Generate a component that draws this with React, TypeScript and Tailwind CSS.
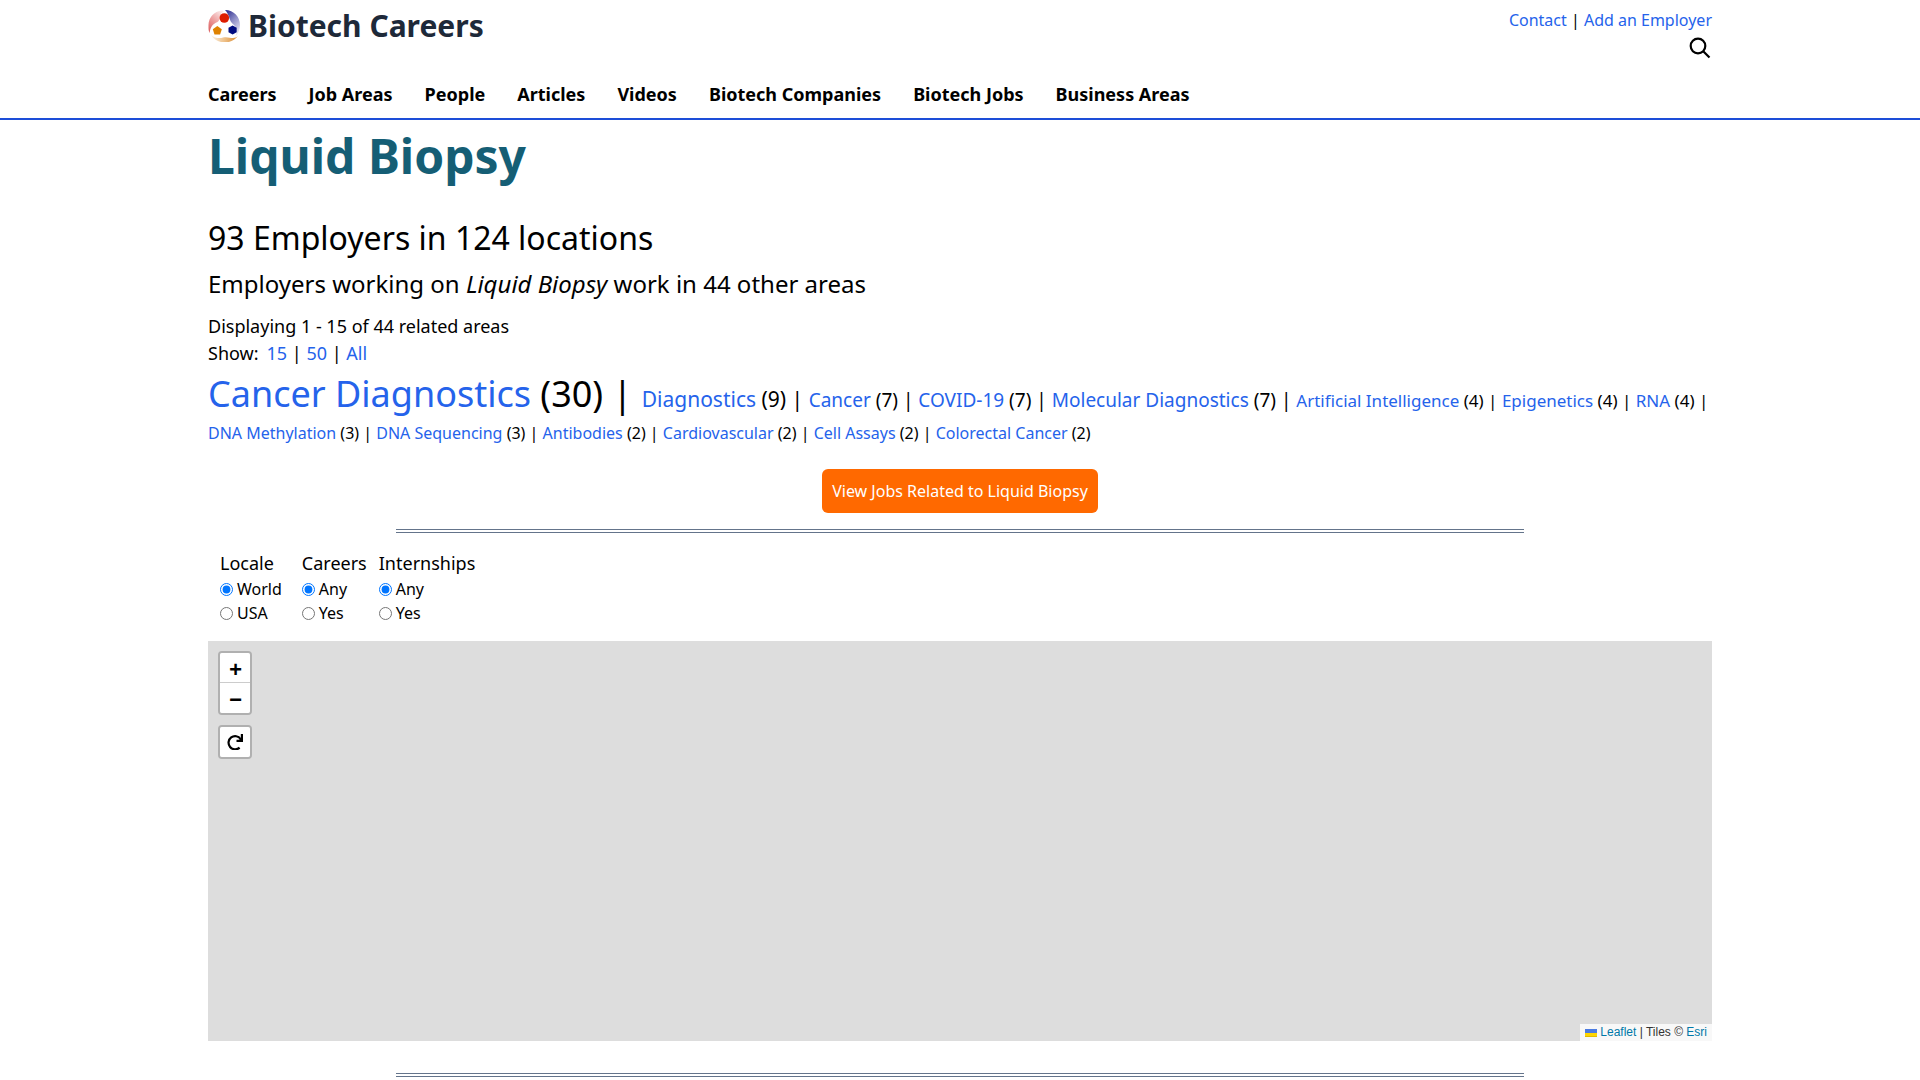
import React from "react";

const navItems = [
  "Careers",
  "Job Areas",
  "People",
  "Articles",
  "Videos",
  "Biotech Companies",
  "Biotech Jobs",
  "Business Areas",
];

const areas = [
  { name: "Cancer Diagnostics", count: 30, size: "text-[36px]" },
  { name: "Diagnostics", count: 9, size: "text-[21px]" },
  { name: "Cancer", count: 7, size: "text-[19px]" },
  { name: "COVID-19", count: 7, size: "text-[19px]" },
  { name: "Molecular Diagnostics", count: 7, size: "text-[19px]" },
  { name: "Artificial Intelligence", count: 4, size: "text-[17px]" },
  { name: "Epigenetics", count: 4, size: "text-[17px]" },
  { name: "RNA", count: 4, size: "text-[17px]" },
  { name: "DNA Methylation", count: 3, size: "text-[16px]" },
  { name: "DNA Sequencing", count: 3, size: "text-[16px]" },
  { name: "Antibodies", count: 2, size: "text-[16px]" },
  { name: "Cardiovascular", count: 2, size: "text-[16px]" },
  { name: "Cell Assays", count: 2, size: "text-[16px]" },
  { name: "Colorectal Cancer", count: 2, size: "text-[16px]" },
];

const filters = [
  { title: "Locale", name: "locale", options: ["World", "USA"], gap: "mr-5" },
  { title: "Careers", name: "careers", options: ["Any", "Yes"], gap: "mr-3" },
  { title: "Internships", name: "internships", options: ["Any", "Yes"], gap: "mr-3" },
];

function A({ children }: { children: React.ReactNode }) {
  return (
    <a href="#" className="text-[#2563eb]">
      {children}
    </a>
  );
}

function Logo() {
  return (
    <svg viewBox="0 0 32 32" className="size-8" aria-hidden="true">
      <defs>
        <linearGradient id="lr" x1="0.8" y1="0" x2="0.2" y2="1">
          <stop offset="0" stopColor="#fbeaea" />
          <stop offset="0.5" stopColor="#eda0a0" />
          <stop offset="1" stopColor="#dc6060" />
        </linearGradient>
        <linearGradient id="lb" x1="0" y1="0" x2="0.6" y2="1">
          <stop offset="0" stopColor="#20208a" />
          <stop offset="0.5" stopColor="#8a8ac4" />
          <stop offset="1" stopColor="#e4e4f2" />
        </linearGradient>
        <linearGradient id="lo" x1="0" y1="0" x2="1" y2="0">
          <stop offset="0" stopColor="#fbf2e6" />
          <stop offset="0.5" stopColor="#eec088" />
          <stop offset="1" stopColor="#d98a30" />
        </linearGradient>
      </defs>
      <path d="M14 .5C6 1 .5 8 .5 15c0 4 0 5 1 8 1-6 3-9 8-11 2-1 2-4 3-7 1-2 2-3 3-3 0-1-1-1.500-1.500-1.500Z" fill="url(#lr)" />
      <path d="M17 0c9 0 15 7 15 15 0 5-2 9-5 12 3-5 2-9-1-12-3-2-4-5-5-8-1-3-2-5-4-7Z" fill="url(#lb)" />
      <path d="M3 25c4 3.500 9 3.500 12 2.500 4-1 7 .5 10 .5 2 0 4-1 5-2-3 4-8 6.500-13 6.500-6 0-11-3-14-7.500Z" fill="url(#lo)" />
      <circle cx="16.300" cy="8" r="4.800" fill="#dd1c00" />
      <path d="m9.300 16 4.500 3.300-1.700 5.200H6.500l-1.700-5.200Z" fill="#df8200" />
      <path d="m24.600 15.400 4.100 2.300v4.600l-4.100 2.300-4.100-2.300v-4.600Z" fill="#000c80" />
    </svg>
  );
}

function Rule() {
  return <hr className="mx-auto h-0 w-3/4 border-0 border-t-4 border-double border-[#64748b]" />;
}

const mapButton = "flex h-[30px] w-[30px] items-center justify-center bg-white text-black";

export default function App() {
  return (
    <div className="font-['Noto_Sans',sans-serif] text-base text-black">
      <header className="border-b-2 border-[#1d4ed8]">
        <div className="mx-auto max-w-[1536px] px-4">
          <div className="flex justify-between pt-2">
            <a href="#" className="flex items-center gap-2 self-start text-3xl font-bold text-gray-800">
              <Logo />
              <span>Biotech Careers</span>
            </a>
            <div className="flex flex-col items-end">
              <div>
                <A>Contact</A> | <A>Add an Employer</A>
              </div>
              <button type="button" aria-label="Search" className="mt-1 flex size-6 items-center justify-center">
                <svg viewBox="0 0 24 24" className="size-6" fill="none" stroke="black" strokeWidth="2.200">
                  <circle cx="10" cy="10" r="7.300" />
                  <path d="m15 15 6.500 6.500" />
                </svg>
              </button>
            </div>
          </div>
          <nav className="flex gap-8 pt-5 pb-2.5 text-lg font-bold">
            {navItems.map((item) => (
              <a href="#" key={item}>
                {item}
              </a>
            ))}
          </nav>
        </div>
      </header>

      <main className="mx-auto max-w-[1536px] px-4">
        <h1 className="pt-3 text-5xl font-bold text-[#155e75]">Liquid Biopsy</h1>
        <h2 className="mt-8 text-[32px] leading-[52px]">93 Employers in 124 locations</h2>
        <h3 className="mt-1 text-2xl">
          Employers working on <i>Liquid Biopsy</i> work in 44 other areas
        </h3>
        <div className="mt-[13px] text-lg leading-[27px]">
          <p>Displaying 1 - 15 of 44 related areas</p>
          <p>
            <span className="mr-2">Show:</span>
            <A>15</A> | <A>50</A> | <A>All</A>
          </p>
        </div>
        <div>
          {areas.map((a, i) => (
            <React.Fragment key={a.name}>
              <span className={a.size}>
                <A>{a.name}</A> ({a.count}){i < areas.length - 1 && " | "}
              </span>
            </React.Fragment>
          ))}
        </div>
        <div className="mt-6 mb-4 flex justify-center">
          <a href="#" className="rounded-md bg-[#ff6900] px-2.5 py-2.5 text-white">
            View Jobs Related to Liquid Biopsy
          </a>
        </div>
        <Rule />

        <form className="mt-4 ml-3 flex">
          {filters.map((f) => (
            <fieldset key={f.name} className={f.gap}>
              <legend className="text-lg">{f.title}</legend>
              {f.options.map((o, i) => (
                <label key={o} className="flex items-center gap-1">
                  <input type="radio" name={f.name} defaultChecked={i === 0} className="size-[13px]" />
                  {o}
                </label>
              ))}
            </fieldset>
          ))}
        </form>

        <section aria-label="Map" className="mt-4 mb-8 flex h-[400px] flex-col justify-between bg-[#dddddd]">
          <div className="flex flex-col items-start gap-2.5 p-2.5">
            <div className="divide-y divide-[#cccccc] overflow-hidden rounded border-2 border-[#b0b0b0] font-['Liberation_Mono',monospace] text-[22px] leading-[30px] font-bold">
              <button type="button" aria-label="Zoom in" className={mapButton + " pt-2 pl-px"}>
                +
              </button>
              <button type="button" aria-label="Zoom out" className={mapButton + " pt-2 pl-px"}>
                −
              </button>
            </div>
            <div className="overflow-hidden rounded border-2 border-[#b0b0b0]">
              <button type="button" aria-label="Reset view" className={mapButton}>
                <svg viewBox="0 0 16 16" className="size-4" fill="none" stroke="black" strokeWidth="2.200">
                  <path d="M12.600 13.600A6.600 6.600 0 1 1 13.600 5" />
                  <path d="M14.900 0v6.900H9.500" />
                  <path d="m11 7 4-4v4Z" fill="black" stroke="none" />
                </svg>
              </button>
            </div>
          </div>
          <div className="flex items-center gap-[3px] self-end bg-[#f8f8f8] px-[5px] font-['Liberation_Sans',sans-serif] text-xs leading-[17px] text-[#333333]">
            <svg viewBox="0 0 12 8" className="h-2 w-3" aria-hidden="true">
              <path fill="#4c7be1" d="M0 0h12v4H0z" />
              <path fill="#ffd500" d="M0 4h12v3H0z" />
              <path fill="#e0bc00" d="M0 7h12v1H0z" />
            </svg>
            <span>
              <a href="#" className="text-[#0078a8]">Leaflet</a> | Tiles © <a href="#" className="text-[#0078a8]">Esri</a>
            </span>
          </div>
        </section>
        <Rule />
      </main>
    </div>
  );
}
